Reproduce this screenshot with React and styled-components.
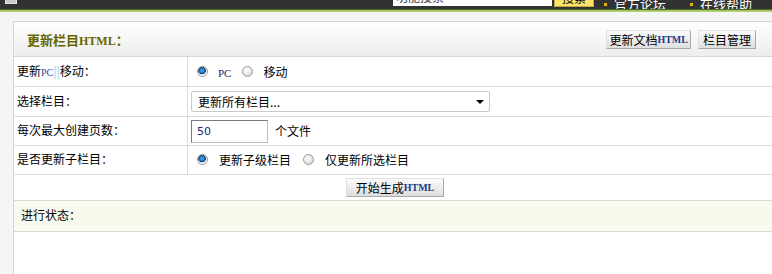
import React from "react";
import styled, { createGlobalStyle } from "styled-components";

const GlobalStyle = createGlobalStyle`
  html, body {
    margin: 0;
    padding: 0;
    background: #f5f5f5;
    overflow: hidden;
  }
  body {
    font-family: "Noto Sans CJK SC", "Liberation Sans", sans-serif;
    font-size: 12px;
    color: #000;
  }
`;

const CJK = `"Noto Sans CJK SC", "Liberation Sans", sans-serif`;

const TopBar = styled.div`
  height: 9px;
  background: #323232;
  display: flex;
  align-items: flex-end;
  overflow: hidden;
  position: relative;
`;

const Thumb = styled.div`
  width: 10px;
  height: 12px;
  margin-left: 5px;
  background: #c9c9c9;
  border: 1px solid #e5e5e5;
  align-self: flex-end;
  margin-bottom: 5px;
`;

const SearchBox = styled.div`
  margin-left: 376px;
  width: 156px;
  height: 18px;
  background: #fff;
  margin-bottom: 3px;
  font-size: 12px;
  line-height: 18px;
  padding-left: 3px;
  color: #333;
`;

const SearchBtn = styled.div`
  margin-left: 2px;
  width: 40px;
  height: 18px;
  background: #fde36a;
  border: 1px solid #c8a640;
  box-sizing: border-box;
  margin-bottom: 2px;
  text-align: center;
  line-height: 16px;
`;

const TopLink = styled.div`
  margin-left: ${(p) => p.$gap}px;
  color: #fff;
  font-size: 13px;
  line-height: 18px;
  display: flex;
  align-items: center;
  gap: 7px;
  margin-bottom: -4px;
  &::before {
    content: "";
    width: 3px;
    height: 3px;
    background: #e0b400;
  }
`;

const GreenLine = styled.div`
  height: 3px;
  background: linear-gradient(#4e6a1c 0, #4e6a1c 1px, #98bd55 1px, #b8d68a 3px);
`;

const Panel = styled.div`
  margin: 9px -4px 0 13px;
  background: #fff;
  border: 1px solid #d4d4d4;
  border-right: none;
  height: 260px;
`;

const Header = styled.div`
  height: 34px;
  border-bottom: 1px solid #d6d6d6;
  background: linear-gradient(#ffffff, #ededed);
  display: flex;
  align-items: center;
  padding: 0 20px 0 13px;
`;

const Title = styled.div`
  font-family: ${CJK};
  font-size: 13px;
  font-weight: bold;
  color: #666600;
  flex: 1;
  margin-top: 1px;
`;

const Latin = styled.span`
  font-family: "Liberation Serif", "DejaVu Serif", serif;
  font-size: ${(p) => p.$size || 11}px;
  font-weight: ${(p) => (p.$plain ? "normal" : "bold")};
  color: ${(p) => p.$color || "inherit"};
`;

const Btn = styled.button`
  font-family: ${CJK};
  font-size: 12px;
  height: 19px;
  padding: 0 ${(p) => p.$pad ?? 5}px;
  margin-left: ${(p) => p.$gap || 0}px;
  border: 1px solid #a9a9a9;
  border-top-color: #e0e0e0;
  border-left-color: #e0e0e0;
  background: linear-gradient(#fbfbfb, #dedede);
  color: #000;
  line-height: 17px;
  display: inline-flex;
  align-items: center;
  white-space: nowrap;
`;

const Table = styled.table`
  width: 100%;
  border-collapse: collapse;
  font-size: 12px;
`;

const Row = styled.tr`
  height: ${(p) => p.$h}px;
  background: ${(p) => p.$bg || "transparent"};
`;

const Label = styled.td`
  width: 170px;
  padding: 0 0 2px 3px;
  border-right: 1px solid #dcdcdc;
  border-bottom: 1px solid #dcdcdc;
  white-space: nowrap;
`;

const Cell = styled.td`
  padding: 0 0 0 3px;
  border-bottom: 1px solid #dcdcdc;
`;

const ButtonCell = styled.td`
  text-align: center;
  padding-top: 1px;
`;

const Options = styled.div`
  display: flex;
  align-items: center;
  padding-left: 6px;
`;

const Radio = styled.span`
  width: 11px;
  height: 11px;
  border-radius: 50%;
  box-sizing: border-box;
  border: 1px solid #9a9a9a;
  background: ${(p) =>
    p.$checked
      ? "radial-gradient(circle at 45% 40%, #5fb4f0 0, #1a6fb5 2.5px, #0b3d70 3.5px, #e9e9e9 4px, #fff 5px)"
      : "radial-gradient(circle at 40% 35%, #ffffff, #cfcfcf)"};
  margin-right: ${(p) => p.$mr}px;
  flex: none;
`;

const OptText = styled.span`
  margin-right: ${(p) => p.$mr || 0}px;
`;

const SelectBox = styled.div`
  position: relative;
  width: 299px;
  height: 21px;
  border: 1px solid #c9c9c9;
  box-sizing: border-box;
  border-radius: 2px;
  background: #fff;
  display: flex;
  align-items: center;
  padding-left: 6px;
  margin-top: 1px;
`;

const Caret = styled.span`
  position: absolute;
  right: 5px;
  top: 8px;
  border-left: 4px solid transparent;
  border-right: 4px solid transparent;
  border-top: 4px solid #000;
`;

const NumInput = styled.div`
  width: 77px;
  height: 23px;
  box-sizing: border-box;
  border: 1px solid #bdbdbd;
  border-top-color: #7a7a7a;
  border-left-color: #7a7a7a;
  display: flex;
  align-items: center;
  padding-left: 5px;
  font-family: "DejaVu Sans", sans-serif;
  font-size: 11px;
  color: #0a2a6e;
  margin-top: 1px;
`;

const InputRow = styled.div`
  display: flex;
  align-items: center;
  gap: 7px;
`;

const StatusLabel = styled.td`
  padding: 0 0 2px 7px;
  border-bottom: 1px solid #d9d9d9;
  border-top: 1px solid #d9d9d9;
`;

export default function App() {
  return (
    <>
      <GlobalStyle />
      <TopBar>
        <Thumb />
        <SearchBox>功能搜索</SearchBox>
        <SearchBtn>搜索</SearchBtn>
        <TopLink $gap={10}>官方论坛</TopLink>
        <TopLink $gap={24}>在线帮助</TopLink>
      </TopBar>
      <GreenLine />
      <Panel>
        <Header>
          <Title>
            更新栏目<Latin $size={12}>HTML</Latin>：
          </Title>
          <Btn $pad={2}>
            更新文档<Latin $size={10} $color="#1a3a8a">HTML</Latin>
          </Btn>
          <Btn $gap={7} $pad={4}>栏目管理</Btn>
        </Header>
        <Table>
          <tbody>
            <Row $h={29}>
              <Label>
                更新<Latin $size={10} $color="#2a4aa0" $plain>PC</Latin>
                <span style={{ color: "#8fc3f0" }}>||</span>移动：
              </Label>
              <Cell>
                <Options>
                  <Radio $checked $mr={10} />
                  <OptText $mr={11}>
                    <Latin $size={11} $color="#1a2a6a" $plain>PC</Latin>
                  </OptText>
                  <Radio $mr={10} />
                  <OptText>移动</OptText>
                </Options>
              </Cell>
            </Row>
            <Row $h={30}>
              <Label>选择栏目：</Label>
              <Cell>
                <SelectBox>
                  更新所有栏目...
                  <Caret />
                </SelectBox>
              </Cell>
            </Row>
            <Row $h={29}>
              <Label>每次最大创建页数：</Label>
              <Cell>
                <InputRow>
                  <NumInput>50</NumInput>
                  个文件
                </InputRow>
              </Cell>
            </Row>
            <Row $h={29}>
              <Label>是否更新子栏目：</Label>
              <Cell>
                <Options>
                  <Radio $checked $mr={11} />
                  <OptText $mr={12}>更新子级栏目</OptText>
                  <Radio $mr={11} />
                  <OptText>仅更新所选栏目</OptText>
                </Options>
              </Cell>
            </Row>
            <Row $h={26}>
              <ButtonCell colSpan={2}>
                <Btn $pad={9}>
                  开始生成<Latin $size={10} $color="#1a3a8a">HTML</Latin>
                </Btn>
              </ButtonCell>
            </Row>
            <Row $h={31} $bg="#f8faee">
              <StatusLabel colSpan={2}>进行状态：</StatusLabel>
            </Row>
          </tbody>
        </Table>
      </Panel>
    </>
  );
}
